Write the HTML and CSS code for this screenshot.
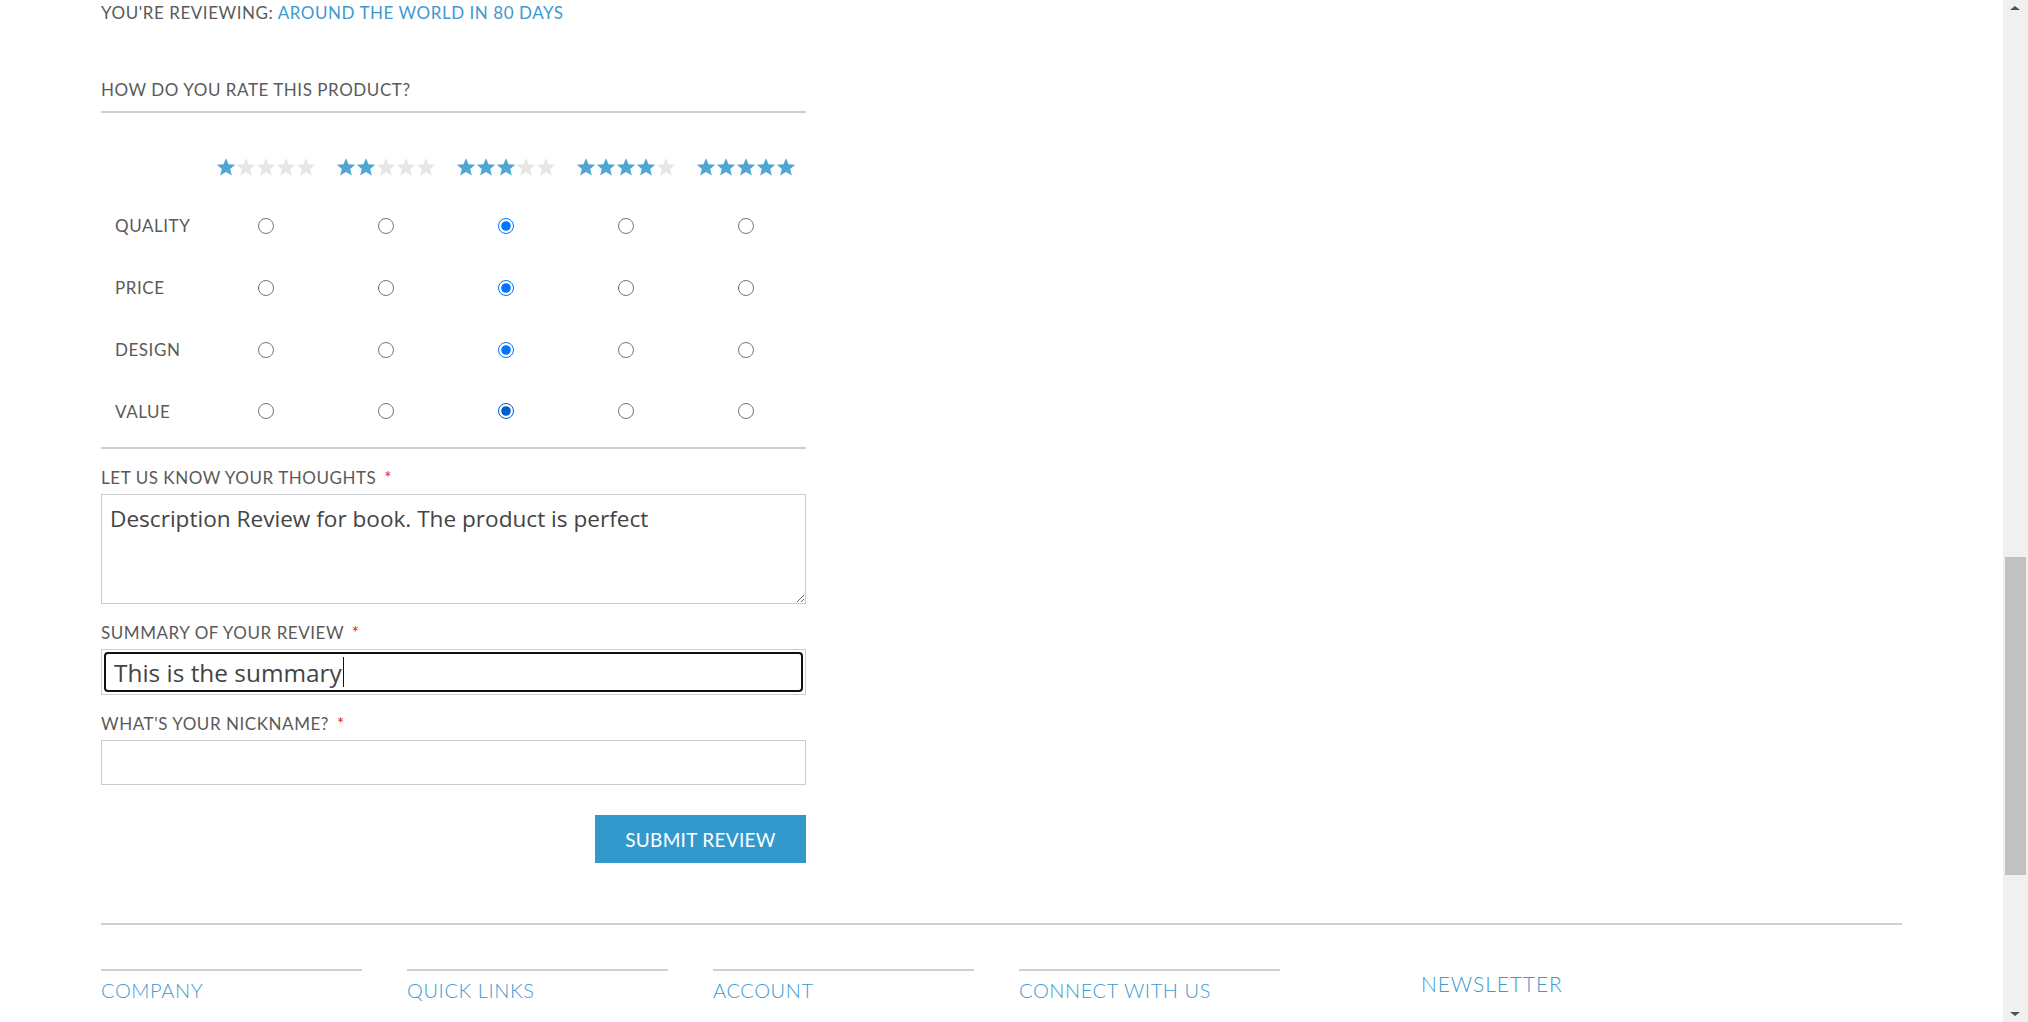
FILE: index.html
```html
<!DOCTYPE html>
<html lang="en">
<head>
<meta charset="utf-8">
<title>Review</title>
<link rel="stylesheet" href="styles.css">
</head>
<body>
<svg class="defs" width="0" height="0" aria-hidden="true">
  <defs>
    <symbol id="star" viewBox="0 0 20 20">
      <path d="M10 1.2l2.6 6.1 6.6.5-5 4.3 1.6 6.5L10 15.1 4.2 18.6l1.6-6.5-5-4.3 6.6-.5z"/>
    </symbol>
  </defs>
</svg>
<div class="page">
  <form class="review-form">
    <p class="reviewing">YOU'RE REVIEWING: <a class="product-link" href="#">AROUND THE WORLD IN 80 DAYS</a></p>
    <h3 class="rate-title">HOW DO YOU RATE THIS PRODUCT?</h3>
    <table class="ratings">
      <thead>
        <tr class="stars-row">
          <th class="label-col"></th>
          <th><span class="stars"><svg class="on"><use href="#star"/></svg><svg><use href="#star"/></svg><svg><use href="#star"/></svg><svg><use href="#star"/></svg><svg><use href="#star"/></svg></span></th>
          <th><span class="stars"><svg class="on"><use href="#star"/></svg><svg class="on"><use href="#star"/></svg><svg><use href="#star"/></svg><svg><use href="#star"/></svg><svg><use href="#star"/></svg></span></th>
          <th><span class="stars"><svg class="on"><use href="#star"/></svg><svg class="on"><use href="#star"/></svg><svg class="on"><use href="#star"/></svg><svg><use href="#star"/></svg><svg><use href="#star"/></svg></span></th>
          <th><span class="stars"><svg class="on"><use href="#star"/></svg><svg class="on"><use href="#star"/></svg><svg class="on"><use href="#star"/></svg><svg class="on"><use href="#star"/></svg><svg><use href="#star"/></svg></span></th>
          <th><span class="stars"><svg class="on"><use href="#star"/></svg><svg class="on"><use href="#star"/></svg><svg class="on"><use href="#star"/></svg><svg class="on"><use href="#star"/></svg><svg class="on"><use href="#star"/></svg></span></th>
        </tr>
      </thead>
      <tbody>
        <tr>
          <td class="label-col">QUALITY</td>
          <td><input type="radio" name="quality"></td>
          <td><input type="radio" name="quality"></td>
          <td><input type="radio" name="quality" checked></td>
          <td><input type="radio" name="quality"></td>
          <td><input type="radio" name="quality"></td>
        </tr>
        <tr>
          <td class="label-col">PRICE</td>
          <td><input type="radio" name="price"></td>
          <td><input type="radio" name="price"></td>
          <td><input type="radio" name="price" checked></td>
          <td><input type="radio" name="price"></td>
          <td><input type="radio" name="price"></td>
        </tr>
        <tr>
          <td class="label-col">DESIGN</td>
          <td><input type="radio" name="design"></td>
          <td><input type="radio" name="design"></td>
          <td><input type="radio" name="design" checked></td>
          <td><input type="radio" name="design"></td>
          <td><input type="radio" name="design"></td>
        </tr>
        <tr>
          <td class="label-col">VALUE</td>
          <td><input type="radio" name="value"></td>
          <td><input type="radio" name="value"></td>
          <td><input class="active" type="radio" name="value" checked></td>
          <td><input type="radio" name="value"></td>
          <td><input type="radio" name="value"></td>
        </tr>
      </tbody>
    </table>

    <div class="field">
      <label class="field-label">LET US KNOW YOUR THOUGHTS <span class="req">*</span></label>
      <textarea class="textarea">Description Review for book. The product is perfect</textarea>
    </div>
    <div class="field">
      <label class="field-label">SUMMARY OF YOUR REVIEW <span class="req">*</span></label>
      <div class="input-wrap">
        <div class="input-focused"><span>This is the summary</span><span class="caret"></span></div>
      </div>
    </div>
    <div class="field">
      <label class="field-label">WHAT'S YOUR NICKNAME? <span class="req">*</span></label>
      <input class="input" type="text">
    </div>
    <div class="actions">
      <button class="submit" type="button">SUBMIT REVIEW</button>
    </div>
  </form>

  <footer class="footer">
    <div class="footer-col"><h4 class="footer-title">COMPANY</h4></div>
    <div class="footer-col"><h4 class="footer-title">QUICK LINKS</h4></div>
    <div class="footer-col"><h4 class="footer-title">ACCOUNT</h4></div>
    <div class="footer-col"><h4 class="footer-title">CONNECT WITH US</h4></div>
    <div class="footer-news"><h4 class="footer-title">NEWSLETTER</h4></div>
  </footer>
</div>
<div class="scrollbar">
  <span class="arrow up"></span>
  <span class="thumb"></span>
  <span class="arrow down"></span>
</div>
</body>
</html>
```

FILE: styles.css
```css
* { box-sizing: border-box; }
html, body { height: 100%; }
body {
  margin: 0;
  padding-right: 25px;
  overflow: hidden;
  background: #fff;
  font-family: "Lato", "Open Sans", sans-serif;
  font-weight: 400;
  color: #5a5a5a;
}
.defs { position: absolute; }
.page {
  width: 1801px;
  margin: 0 auto;
}
.review-form { width: 705px; }

.reviewing {
  margin: 0;
  font-size: 17px;
  line-height: 26px;
  letter-spacing: 0.55px;
  color: #5a5a5a;
}
.product-link { color: #3d9ad1; text-decoration: none; }

.rate-title {
  margin: 51px 0 0;
  font-size: 17px;
  font-weight: 400;
  letter-spacing: 0.55px;
  line-height: 26px;
  padding-bottom: 8px;
  border-bottom: 2px solid #cfcfcf;
  color: #5a5a5a;
}

.ratings {
  width: 705px;
  border-collapse: collapse;
  border-bottom: 2px solid #cfcfcf;
}
.ratings th, .ratings td {
  padding: 0;
  text-align: center;
  width: 120px;
}
.ratings .label-col {
  width: 105px;
  text-align: left;
  padding-left: 14px;
  padding-top: 2px;
  font-size: 17px;
  font-weight: 400;
  letter-spacing: 0.55px;
  color: #5a5a5a;
}
.stars-row th { height: 80px; padding-top: 31px; }
.ratings tbody tr { height: 62px; }
.ratings tbody tr:last-child { height: 69px; }
.ratings tbody tr:last-child td { padding-bottom: 7px; }
.ratings tbody tr:last-child td.label-col { padding-bottom: 5px; }
.stars { display: inline-flex; }
.stars svg { width: 20px; height: 20px; fill: #e6e6e6; }
.stars svg.on { fill: #52a6d4; }
.ratings input[type=radio] {
  margin: 0;
  width: 16px;
  height: 16px;
  vertical-align: middle;
  accent-color: #0075ff;
}
.ratings input.active { accent-color: #005cc8; }

.field { margin-top: 17px; }
.field-label {
  display: block;
  font-size: 17px;
  line-height: 22px;
  letter-spacing: 0.55px;
  padding-top: 1px;
  margin-bottom: 5px;
  color: #5a5a5a;
}
.req { color: #e02b27; margin-left: 3px; }
.textarea {
  display: block;
  width: 705px;
  height: 110px;
  border: 1px solid #ccc;
  padding: 9px 8px;
  margin: 0;
  font-family: "Open Sans", sans-serif;
  font-size: 22.6px;
  line-height: 30px;
  color: #444;
  resize: vertical;
}
.input-wrap {
  width: 705px;
  height: 46px;
  border: 1px solid #ccc;
  padding: 2px;
}
.input-focused {
  height: 100%;
  border: 2px solid #111;
  border-radius: 4px;
  padding: 0 8px;
  display: flex;
  align-items: center;
  font-family: "Open Sans", sans-serif;
  font-size: 24.4px;
  color: #444;
}
.caret {
  display: inline-block;
  width: 1.5px;
  height: 30px;
  background: #111;
  margin-left: 1px;
}
.input {
  display: block;
  width: 705px;
  height: 45px;
  border: 1px solid #ccc;
  margin: 0;
  padding: 0 8px;
  font-size: 20px;
}
.actions {
  display: flex;
  justify-content: flex-end;
  margin-top: 30px;
}
.submit {
  width: 211px;
  height: 48px;
  border: 0;
  background: #3399cc;
  color: #fff;
  font-family: "Lato", sans-serif;
  font-weight: 400;
  font-size: 19px;
  letter-spacing: 0.3px;
  padding: 0;
}

.footer {
  margin-top: 60px;
  border-top: 2px solid #d0d0d0;
  padding-top: 44px;
  display: flex;
  align-items: flex-start;
}
.footer-col {
  width: 261px;
  margin-right: 45px;
  border-top: 2px solid #d0d0d0;
}
.footer-news { margin-left: 96px; margin-top: 3px; }
.footer-title {
  margin: 0;
  font-size: 20px;
  font-weight: 300;
  letter-spacing: 0.6px;
  line-height: 38px;
  color: #3d9ad1;
}
.footer-news .footer-title { line-height: 24px; font-size: 21px; letter-spacing: 0.9px; }

.scrollbar {
  position: fixed;
  top: 0;
  right: 0;
  width: 25px;
  height: 100%;
  background: #f0f0f0;
}
.thumb {
  position: absolute;
  left: 2px;
  right: 2px;
  top: 557px;
  height: 318px;
  background: #c1c1c1;
}
.arrow {
  position: absolute;
  left: 7px;
  width: 0;
  height: 0;
  border-left: 5px solid transparent;
  border-right: 5px solid transparent;
}
.arrow.up { top: 6px; border-bottom: 4px solid #505050; }
.arrow.down { bottom: 6px; border-top: 4px solid #505050; }
```
